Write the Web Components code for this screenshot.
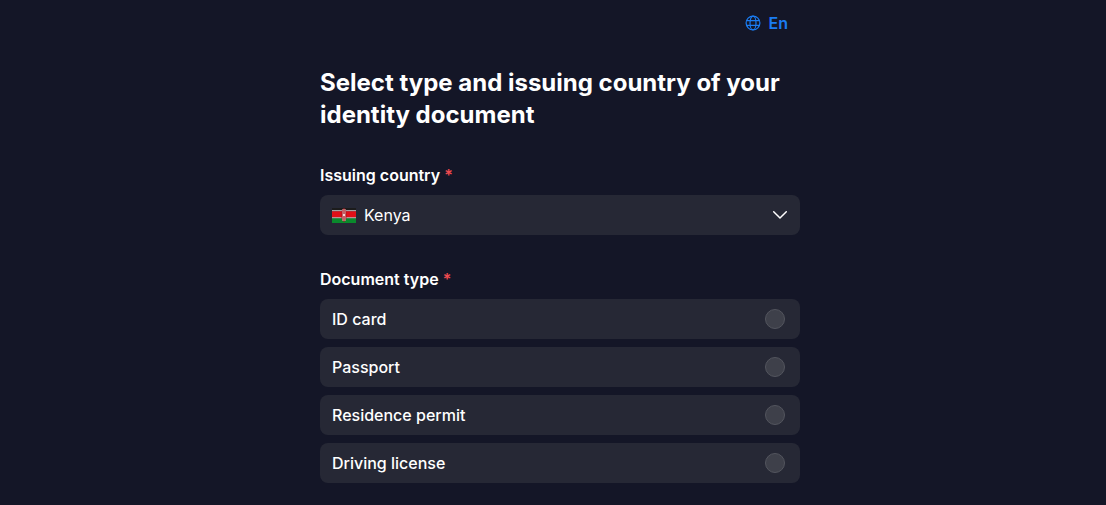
<!DOCTYPE html>
<html lang="en">
<head>
<meta charset="utf-8">
<title>Document type</title>
<style>
html, body { margin: 0; height: 100%; background: #141627; overflow: hidden; }
body { font-family: Inter, "Liberation Sans", sans-serif; color: #fff; }
</style>
</head>
<body>
<doc-page>
  <lang-switch slot="lang">En</lang-switch>
  <span slot="title">Select type and issuing country of your identity document</span>
  <form-field label="Issuing country">
    <country-select>Kenya</country-select>
  </form-field>
  <form-field label="Document type" class="types">
    <radio-row>ID card</radio-row>
    <radio-row>Passport</radio-row>
    <radio-row>Residence permit</radio-row>
    <radio-row>Driving license</radio-row>
  </form-field>
</doc-page>

<script>
class DocPage extends HTMLElement {
    constructor() {
        super()
        this.attachShadow({ mode: 'open' }).innerHTML = `
        <style>
        :host { display: block; width: 480px; margin-left: 320px; }
        .top { display: flex; justify-content: flex-end; height: 46px; padding: 0 12px; align-items: center; }
        h1 { margin: 21px 0 34px; font-size: 24px; line-height: 32px; font-weight: 700; color: #fff; }
        .body { display: flex; flex-direction: column; gap: 34px; }
        </style>
        <div class="top"><slot name="lang"></slot></div>
        <h1><slot name="title"></slot></h1>
        <div class="body"><slot></slot></div>`
    }
}

class LangSwitch extends HTMLElement {
    constructor() {
        super()
        this.attachShadow({ mode: 'open' }).innerHTML = `
        <style>
        :host { display: flex; align-items: center; gap: 8px; color: #1a7cf2; font-size: 16px; font-weight: 600; line-height: 20px; }
        svg { width: 16px; height: 16px; display: block; }
        </style>
        <svg viewBox="0 0 16 16" fill="none" stroke="currentColor" stroke-width="1.2">
            <circle cx="8" cy="8" r="6.9"/>
            <ellipse cx="8" cy="8" rx="3" ry="6.9"/>
            <path d="M1.6 5.6h12.8M1.6 10.4h12.8"/>
        </svg>
        <slot></slot>`
    }
}

class FormField extends HTMLElement {
    constructor() {
        super()
        this.attachShadow({ mode: 'open' }).innerHTML = `
        <style>
        :host { display: block; }
        .label { font-size: 16px; line-height: 20px; font-weight: 600; color: #fff; margin-bottom: 10px; }
        .req { color: #f04a4f; }
        .items { display: flex; flex-direction: column; gap: 8px; }
        </style>
        <div class="label"><span id="text"></span> <span class="req">*</span></div>
        <div class="items"><slot></slot></div>`
    }
    connectedCallback() {
        this.shadowRoot.getElementById('text').textContent = this.getAttribute('label')
    }
}

const rowStyle = `
    :host { display: flex; align-items: center; justify-content: space-between; height: 40px; padding: 0 12px; box-sizing: border-box; background: #262835; border-radius: 8px; font-size: 16px; font-weight: 500; color: #fff; }
`

class CountrySelect extends HTMLElement {
    constructor() {
        super()
        this.attachShadow({ mode: 'open' }).innerHTML = `
        <style>
        ${rowStyle}
        :host { font-weight: 400; }
        .left { display: flex; align-items: center; gap: 8px; }
        .flag { width: 24px; height: 15px; display: block; }
        .chev { width: 16px; height: 16px; display: block; }
        </style>
        <div class="left">
            <svg class="flag" viewBox="0 0 24 15">
                <rect width="24" height="3" fill="#1c1c1c"/>
                <rect y="2.4" width="24" height=".9" fill="#fff"/>
                <rect y="3.3" width="24" height="6.2" fill="#e01019"/>
                <rect y="9.5" width="24" height=".9" fill="#fff"/>
                <rect y="10.4" width="24" height="4.6" fill="#0a8a2c"/>
                <ellipse cx="12" cy="7" rx="2.6" ry="6.8" fill="#a8141c"/>
                <path d="M11 1v12M13 1v12" stroke="#f2d8d8" stroke-width=".8"/>
                <circle cx="12" cy="7" r="1" fill="#fff"/>
            </svg>
            <slot></slot>
        </div>
        <svg class="chev" viewBox="0 0 16 16" fill="none" stroke="#fff" stroke-width="1.5" stroke-linecap="round" stroke-linejoin="round">
            <path d="M1.7 4.8 8 11l6.3-6.2"/>
        </svg>`
    }
}

class RadioRow extends HTMLElement {
    constructor() {
        super()
        this.attachShadow({ mode: 'open' }).innerHTML = `
        <style>
        ${rowStyle}
        :host { padding-right: 15px; }
        .dot { width: 20px; height: 20px; box-sizing: border-box; border-radius: 50%; background: #3e404a; border: 1px solid #53555e; }
        </style>
        <slot></slot>
        <div class="dot"></div>`
    }
}

customElements.define('doc-page', DocPage)
customElements.define('lang-switch', LangSwitch)
customElements.define('form-field', FormField)
customElements.define('country-select', CountrySelect)
customElements.define('radio-row', RadioRow)
</script>
</body>
</html>
